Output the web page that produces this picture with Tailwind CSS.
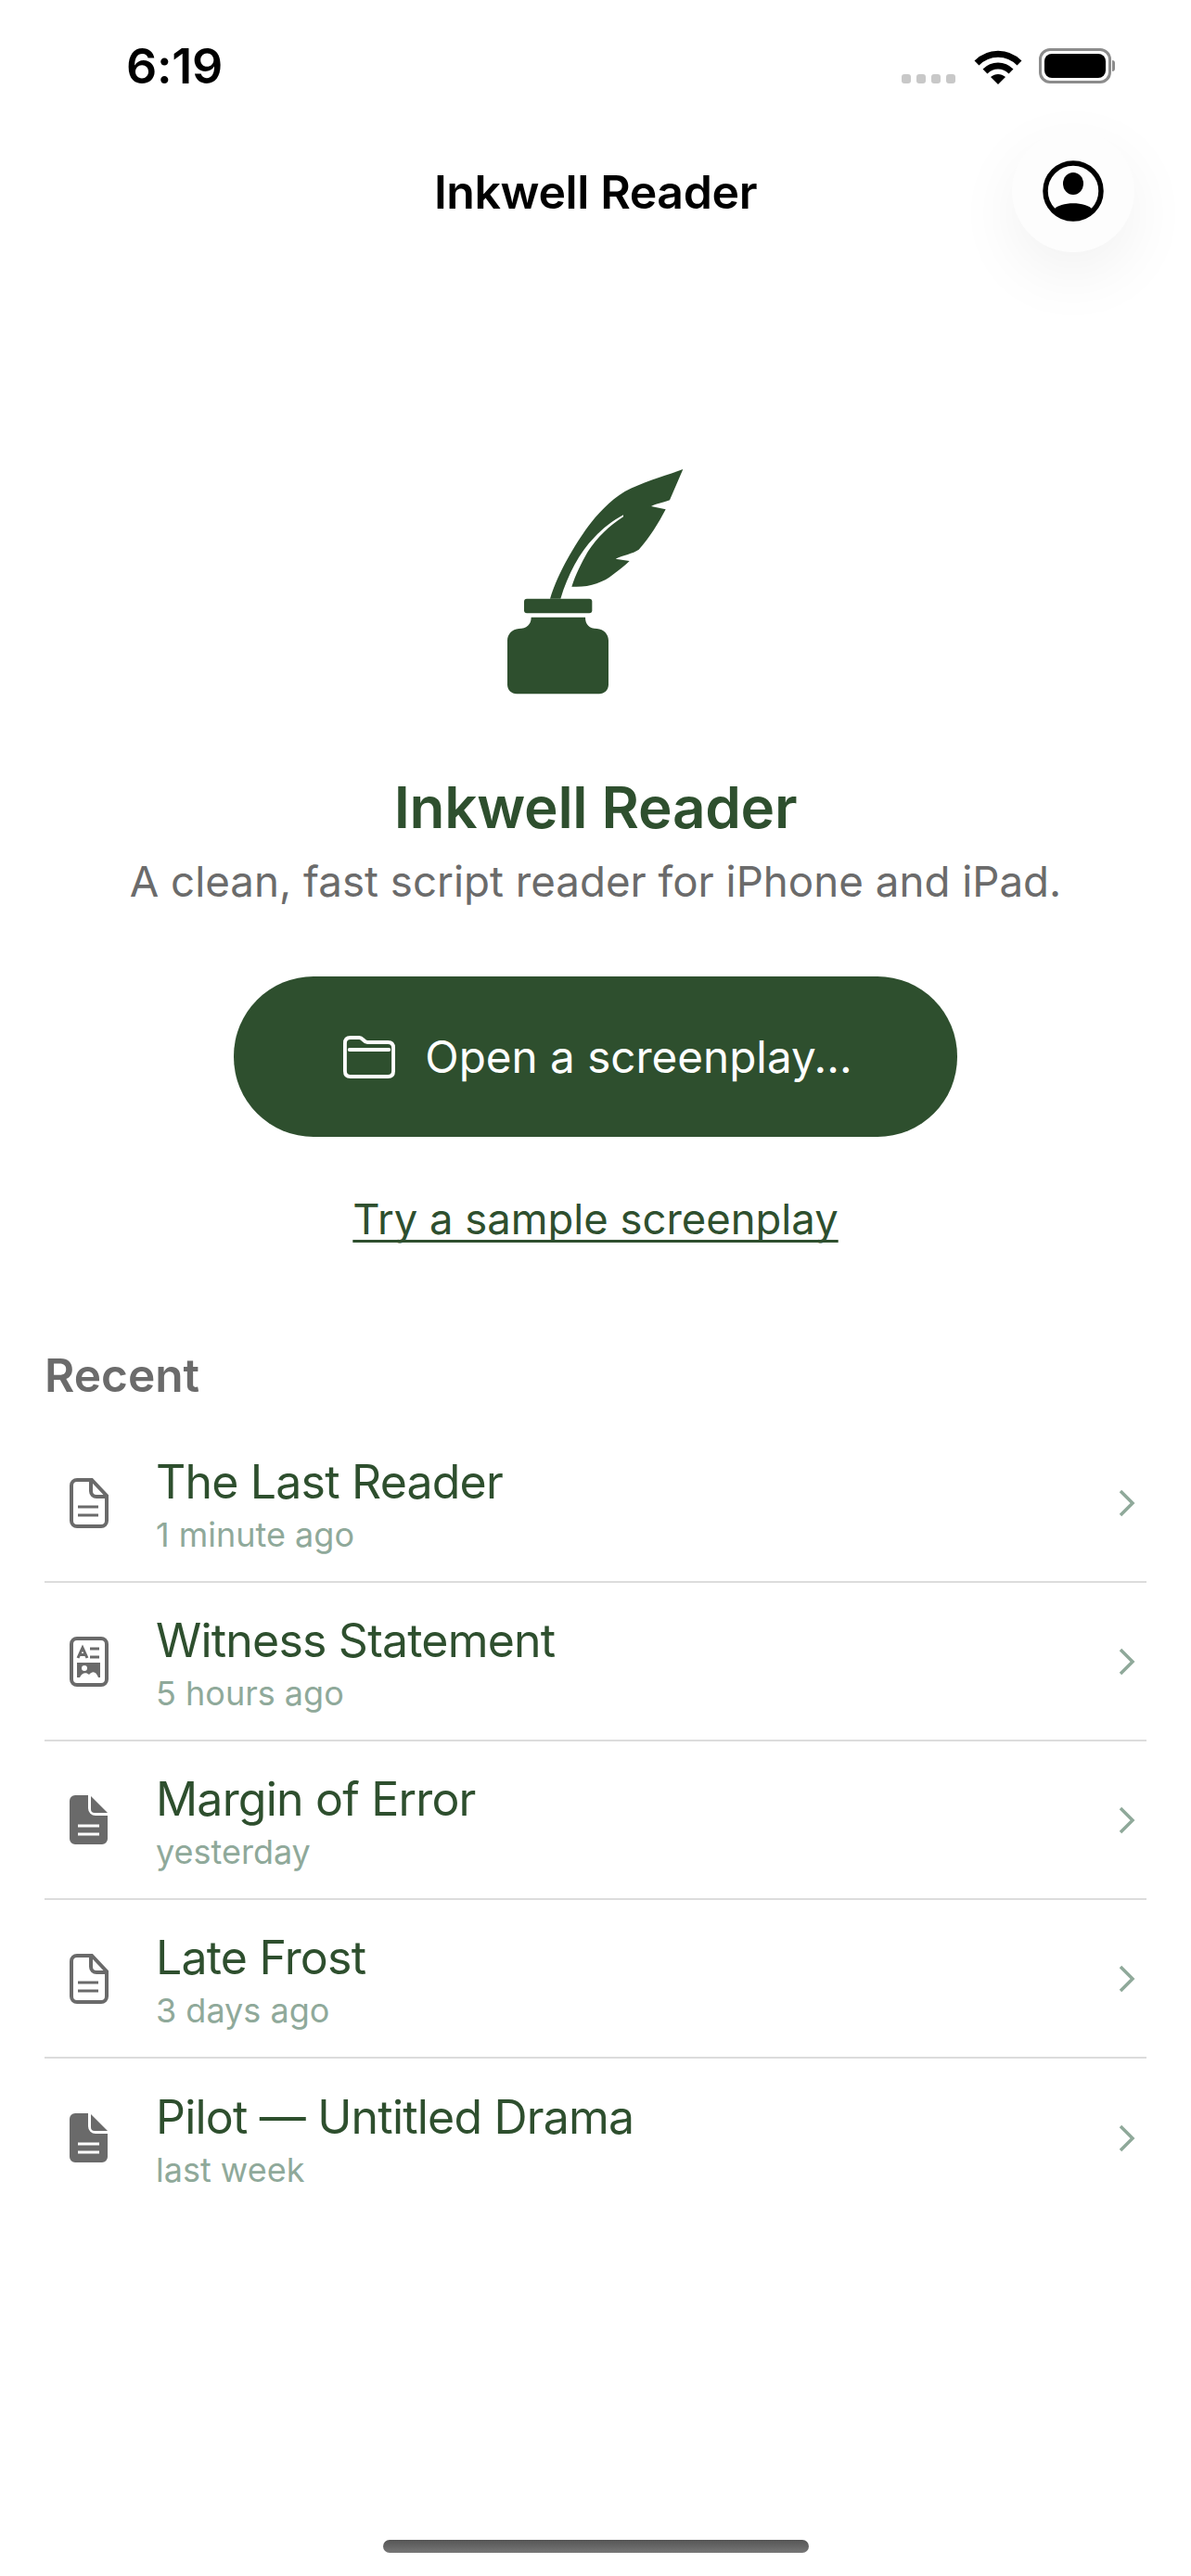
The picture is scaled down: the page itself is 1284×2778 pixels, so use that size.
<!DOCTYPE html>
<html lang="en">
<head>
  <meta charset="UTF-8" />
  <title>Inkwell Reader</title>
  <script src="https://cdn.jsdelivr.net/npm/@tailwindcss/browser@4"></script>
</head>
<body class="bg-white font-['Inter',sans-serif] w-[1284px] h-[2778px] overflow-hidden relative">
  <!-- Status bar -->
  <div class="flex justify-between h-[120px] pl-[136px] pr-[82px] pt-[41px]">
    <span class="text-[52px] leading-[62px] font-semibold text-black tracking-[-0.3px]">6:19</span>
    <div class="flex items-start pt-[11px]">
      <div class="flex gap-[6px] mt-[28px] mr-[20px]">
        <span class="w-[10px] h-[10px] rounded-[3px] bg-[#c8c8c8]"></span>
        <span class="w-[10px] h-[10px] rounded-[3px] bg-[#c8c8c8]"></span>
        <span class="w-[10px] h-[10px] rounded-[3px] bg-[#c8c8c8]"></span>
        <span class="w-[10px] h-[10px] rounded-[3px] bg-[#c8c8c8]"></span>
      </div>
      <svg width="52" height="38" viewBox="0 0 52 38" class="mr-[18px] mt-[2px]">
        <path d="M3 14 C16 1 36 1 49 14" fill="none" stroke="#000" stroke-width="7" />
        <path d="M12 23 C20 15 32 15 40 23" fill="none" stroke="#000" stroke-width="7" />
        <path d="M18 29 C23 25 29 25 34 29 L26 37 Z" fill="#000" />
      </svg>
      <div class="relative flex items-center">
        <div class="w-[78px] h-[38px] rounded-[12px] border-[3px] border-[#8c8c8c] p-[3px]">
          <div class="w-full h-full rounded-[8px] bg-black"></div>
        </div>
        <div class="w-[3px] h-[12px] rounded-r-full bg-[#8c8c8c] ml-[1px]"></div>
      </div>
    </div>
  </div>

  <!-- Nav -->
  <header class="relative flex items-center justify-center h-[174px]">
    <h1 class="text-[50px] leading-[60px] font-semibold text-black tracking-[-0.4px]">Inkwell Reader</h1>
    <button class="absolute left-[1091px] top-[20px] w-[132px] h-[132px] rounded-full bg-[#fdfdfd] shadow-[0_24px_70px_rgba(0,0,0,0.06)] flex items-center justify-center">
      <svg width="68" height="68" viewBox="0 0 68 68">
        <circle cx="34" cy="34" r="30" fill="none" stroke="#000" stroke-width="5.5" />
        <ellipse cx="34" cy="26" rx="11" ry="12" fill="#000" />
        <path d="M13 54 C20 45 48 45 55 54 C45 67 23 67 13 54 Z" fill="#000" />
      </svg>
    </button>
  </header>

  <!-- Hero -->
  <section class="flex flex-col items-center">
    <svg width="190" height="244" viewBox="140 78 570 732" class="mt-[212px]">
      <path fill="#2e4f2e" d="M708 78 C650 100 580 118 520 150 C470 180 430 225 400 265 C360 320 305 410 278 497 L312 497 C335 420 375 345 420 300 C450 268 480 245 515 226 L515 232 C470 260 430 300 400 345 C380 380 360 420 348 458 C400 462 450 445 480 420 C500 405 520 390 535 375 L490 368 C515 355 545 352 565 338 C600 300 630 250 652 208 L605 198 C625 188 650 185 665 178 Z" />
      <rect x="194" y="497" width="220" height="47" rx="9" fill="#2e4f2e" />
      <path fill="#2e4f2e" d="M217 557 H392 C392 580 405 594 430 594 C452 596 467 612 467 632 V775 C467 792 454 805 437 805 H170 C153 805 140 792 140 775 V632 C140 612 155 596 177 594 C202 594 217 580 217 557 Z" />
    </svg>
    <h2 class="mt-[83px] text-[62px] leading-[76px] font-semibold text-[#2e4f2e] tracking-[-0.3px]">Inkwell Reader</h2>
    <p class="mt-[14px] text-[45.7px] leading-[56px] text-[#6b6b6b]">A clean, fast script reader for iPhone and iPad.</p>
    <button class="mt-[74px] w-[780px] h-[173px] pl-[5px] rounded-[86px] bg-[#2e4f2e] flex items-center justify-center gap-[32px] text-white text-[47.6px]">
      <svg width="56" height="46" viewBox="0 0 58 46" preserveAspectRatio="none" fill="none" stroke="#fff" stroke-width="4">
        <path d="M8 2 H18 C22 2 23 7 27 7 H50 C54 7 56 9 56 13 V38 C56 42 54 44 50 44 H8 C4 44 2 42 2 38 V8 C2 4 4 2 8 2 Z" />
        <path d="M7 15 H51" stroke-linecap="round" />
      </svg>
      <span>Open a screenplay...</span>
    </button>
    <a class="mt-[61px] text-[45.4px] leading-[56px] text-[#2e4f2e] underline underline-offset-[6px] decoration-[3px] [text-decoration-skip-ink:none]">Try a sample screenplay</a>
  </section>

  <!-- Recent -->
  <section class="px-[48px] mt-[111px]">
    <h3 class="text-[49.6px] leading-[58px] font-semibold text-[#6b6b6b] mb-[24px]">Recent</h3>
    <ul>
      <li class="flex items-center h-[171px] border-b-2 border-[#dcdcdc]">
        <span class="w-[120px] pl-[27px] flex">
          <svg width="42" height="54" viewBox="0 0 42 54" fill="none" stroke="#6a6a6a" stroke-width="4"><path d="M8 2 H24 L40 19 V46 a6 6 0 0 1 -6 6 H8 a6 6 0 0 1-6-6 V8 a6 6 0 0 1 6-6z" /><path d="M23 2 V14 a6 6 0 0 0 6 6 H40" /><path d="M9 31 H31 M9 40 H31" stroke-width="3" /></svg>
        </span>
        <div class="flex-1 pt-[4px]"><div class="text-[50px] leading-[60px] tracking-[-0.8px] text-[#2e4f2e]">The Last Reader</div><div class="mt-[5px] text-[36px] leading-[44px] text-[#8fa99a]">1 minute ago</div></div>
        <svg width="18" height="30" viewBox="0 0 18 30" fill="none" stroke="#8fa99a" stroke-width="3.5" class="mr-[12px]"><path d="M2 2 L15 15 L2 28" /></svg>
      </li>
      <li class="flex items-center h-[171px] border-b-2 border-[#dcdcdc]">
        <span class="w-[120px] pl-[27px] flex">
          <svg width="42" height="54" viewBox="0 0 42 54" fill="none" stroke="#6a6a6a" stroke-width="4"><rect x="2" y="2" width="38" height="50" rx="6" /><path d="M9 23 L14 12 L19 23 M11 19.5 H17" stroke-width="3" /><path d="M22 13 H32 M22 22 H32" stroke-width="3" /><path fill="#6a6a6a" stroke="none" d="M8 28 H33 V44 H8 Z" /><circle cx="16" cy="34" r="3" fill="#fff" stroke="none" /><path fill="#fff" stroke="none" d="M11 44 C13 39 18 38 21 41 C25 36 29 38 31 44 Z" /></svg>
        </span>
        <div class="flex-1 pt-[4px]"><div class="text-[50px] leading-[60px] tracking-[-0.8px] text-[#2e4f2e]">Witness Statement</div><div class="mt-[5px] text-[36px] leading-[44px] text-[#8fa99a]">5 hours ago</div></div>
        <svg width="18" height="30" viewBox="0 0 18 30" fill="none" stroke="#8fa99a" stroke-width="3.5" class="mr-[12px]"><path d="M2 2 L15 15 L2 28" /></svg>
      </li>
      <li class="flex items-center h-[171px] border-b-2 border-[#dcdcdc]">
        <span class="w-[120px] pl-[27px] flex">
          <svg width="42" height="54" viewBox="0 0 42 54"><path fill="#6a6a6a" d="M6 0 H20 V14 a8 8 0 0 0 8 8 H41 V47 a6 6 0 0 1-6 6 H6 a6 6 0 0 1-6-6 V6 a6 6 0 0 1 6-6z" /><path fill="#6a6a6a" d="M23 1 L41 19 H27 a4 4 0 0 1-4-4z" /><path d="M9 33 H32 M9 42 H32" stroke="#fff" stroke-width="3" /></svg>
        </span>
        <div class="flex-1 pt-[4px]"><div class="text-[50px] leading-[60px] tracking-[-0.8px] text-[#2e4f2e]">Margin of Error</div><div class="mt-[5px] text-[36px] leading-[44px] text-[#8fa99a]">yesterday</div></div>
        <svg width="18" height="30" viewBox="0 0 18 30" fill="none" stroke="#8fa99a" stroke-width="3.5" class="mr-[12px]"><path d="M2 2 L15 15 L2 28" /></svg>
      </li>
      <li class="flex items-center h-[171px] border-b-2 border-[#dcdcdc]">
        <span class="w-[120px] pl-[27px] flex">
          <svg width="42" height="54" viewBox="0 0 42 54" fill="none" stroke="#6a6a6a" stroke-width="4"><path d="M8 2 H24 L40 19 V46 a6 6 0 0 1 -6 6 H8 a6 6 0 0 1-6-6 V8 a6 6 0 0 1 6-6z" /><path d="M23 2 V14 a6 6 0 0 0 6 6 H40" /><path d="M9 31 H31 M9 40 H31" stroke-width="3" /></svg>
        </span>
        <div class="flex-1 pt-[4px]"><div class="text-[50px] leading-[60px] tracking-[-0.8px] text-[#2e4f2e]">Late Frost</div><div class="mt-[5px] text-[36px] leading-[44px] text-[#8fa99a]">3 days ago</div></div>
        <svg width="18" height="30" viewBox="0 0 18 30" fill="none" stroke="#8fa99a" stroke-width="3.5" class="mr-[12px]"><path d="M2 2 L15 15 L2 28" /></svg>
      </li>
      <li class="flex items-center h-[171px]">
        <span class="w-[120px] pl-[27px] flex">
          <svg width="42" height="54" viewBox="0 0 42 54"><path fill="#6a6a6a" d="M6 0 H20 V14 a8 8 0 0 0 8 8 H41 V47 a6 6 0 0 1-6 6 H6 a6 6 0 0 1-6-6 V6 a6 6 0 0 1 6-6z" /><path fill="#6a6a6a" d="M23 1 L41 19 H27 a4 4 0 0 1-4-4z" /><path d="M9 33 H32 M9 42 H32" stroke="#fff" stroke-width="3" /></svg>
        </span>
        <div class="flex-1 pt-[4px]"><div class="text-[50px] leading-[60px] tracking-[-0.8px] text-[#2e4f2e]">Pilot — Untitled Drama</div><div class="mt-[5px] text-[36px] leading-[44px] text-[#8fa99a]">last week</div></div>
        <svg width="18" height="30" viewBox="0 0 18 30" fill="none" stroke="#8fa99a" stroke-width="3.5" class="mr-[12px]"><path d="M2 2 L15 15 L2 28" /></svg>
      </li>
    </ul>
  </section>

  <!-- Home indicator -->
  <div class="absolute bottom-[25px] left-[413px] w-[459px] h-[14px] rounded-[7px] bg-linear-to-b from-[#555] to-[#777]"></div>
</body>
</html>
